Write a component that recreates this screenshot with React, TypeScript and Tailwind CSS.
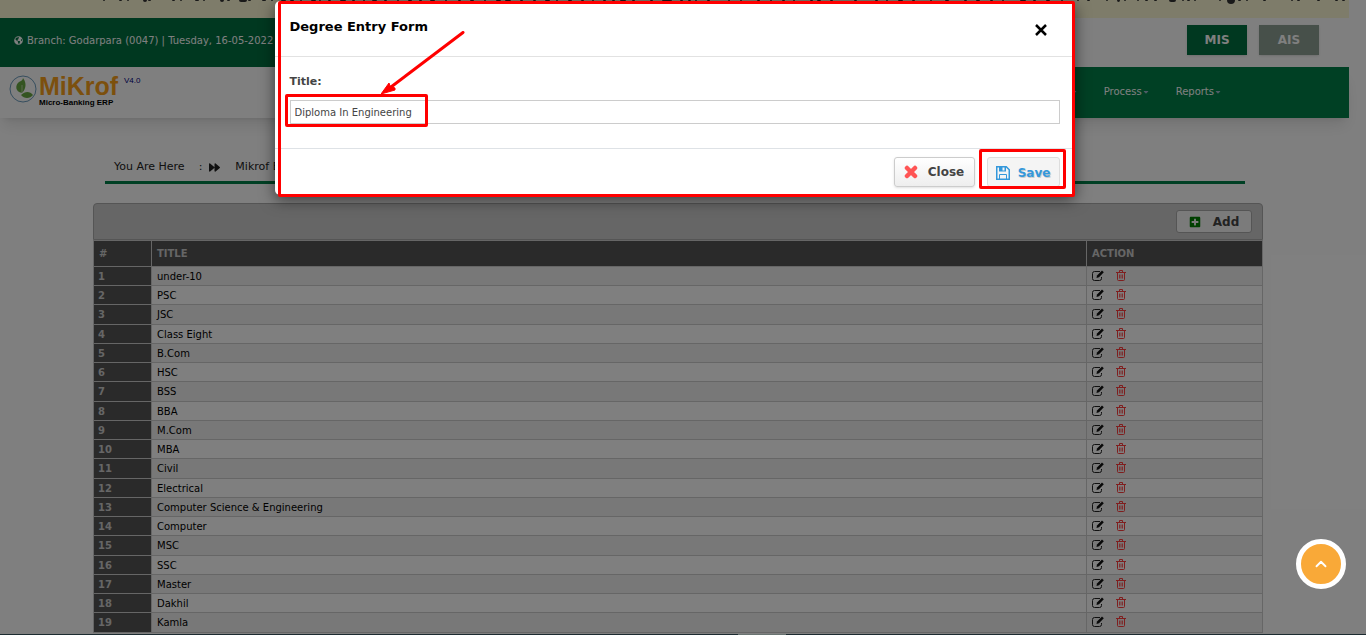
import React from "react";
import { FaGlobeAmericas, FaForward, FaPlusSquare, FaCaretDown } from "react-icons/fa";
import { ChevronUp } from "lucide-react";

const degrees = [
  "under-10", "PSC", "JSC", "Class Eight", "B.Com", "HSC", "BSS", "BBA", "M.Com", "MBA",
  "Civil", "Electrical", "Computer Science & Engineering", "Computer", "MSC", "SSC", "Master", "Dakhil", "Kamla",
];

// [x, width, height] of the strokes left visible under the scrolled notice line
const noticeStrokes = [
  [103, 2, 1], [119, 3, 1], [127, 2, 1], [143, 4, 2], [148, 3, 1], [172, 3, 1], [180, 2, 1], [195, 4, 1], [203, 2, 1],
  [220, 4, 2], [227, 3, 1], [239, 8, 2], [248, 3, 1], [262, 4, 1], [271, 2, 1],
  [281, 5, 1], [290, 4, 1], [300, 2, 1], [311, 5, 1], [319, 2, 1], [328, 3, 1], [340, 6, 1], [352, 3, 1], [363, 2, 1],
  [372, 5, 1], [384, 3, 1], [397, 2, 1], [408, 4, 1], [419, 3, 1], [430, 5, 1], [445, 2, 1], [458, 3, 1], [470, 4, 1],
  [484, 2, 1], [496, 5, 1], [505, 6, 1], [520, 3, 1], [533, 3, 1], [545, 5, 1], [556, 2, 1], [568, 4, 1], [581, 3, 1],
  [592, 2, 1], [603, 3, 1], [612, 3, 1], [620, 6, 1], [632, 3, 1], [650, 3, 1], [662, 10, 1], [680, 3, 1], [688, 3, 1],
  [695, 2, 1], [707, 3, 1], [728, 2, 1], [740, 2, 1], [757, 3, 1], [770, 2, 1], [782, 3, 1], [793, 2, 1], [810, 3, 1],
  [817, 4, 1], [830, 3, 1], [854, 3, 1], [875, 3, 1], [886, 2, 1], [898, 5, 1], [912, 3, 1], [930, 2, 1], [945, 4, 1],
  [964, 3, 1], [976, 4, 1], [990, 3, 1], [1002, 2, 1], [1020, 6, 1], [1033, 3, 1], [1046, 4, 1], [1061, 2, 1],
  [1077, 2, 1], [1087, 3, 1], [1106, 2, 1], [1117, 3, 2], [1124, 2, 1], [1137, 2, 1], [1145, 3, 1], [1154, 3, 1],
  [1169, 7, 2], [1182, 2, 1], [1187, 3, 1], [1194, 2, 1], [1219, 2, 1], [1227, 8, 4], [1238, 3, 1], [1246, 2, 1],
  [1263, 3, 1], [1291, 2, 1], [1297, 3, 1], [1317, 3, 1], [1335, 3, 1], [1342, 3, 1],
];

function Leaf() {
  return (
    <svg className="size-7 shrink-0" viewBox="0 0 28 28" aria-hidden="true">
      <circle cx="14" cy="14" r="13" fill="none" stroke="#6c9cbd" />
      <path d="M14 3c4 5 3 11-1 15-7-1-7-8-3-11 2-1 4-2 4-4Z" fill="#69a843" />
      <path d="M12 20c4-4 9-4 12 0-3 4-9 4-12 0Z" fill="#69a843" />
      <path d="M13 10v8" fill="none" stroke="#fff" strokeWidth=".5" />
    </svg>
  );
}

function EditIcon() {
  return (
    <svg className="h-[11px] w-3" viewBox="0 0 12 11" fill="none" aria-hidden="true">
      <path d="M8 1.500H2.500Q.5 1.500.5 3.500v5q0 2 2 2h5q2 0 2-2V7" stroke="#222" />
      <path d="m4.500 8 .5-2.500L10 .5 11.800 2.300 7 7.300Z" fill="#111" />
    </svg>
  );
}

function TrashIcon() {
  return (
    <svg className="h-[11px] w-[10px]" viewBox="0 0 10 11" fill="none" stroke="#ff3c3c" aria-hidden="true">
      <path d="M0 2.500h10M3.500 2.500v-2h3v2M1.500 3v6.500q0 1 1 1h5q1 0 1-1V3" />
      <path d="M3.500 4.500v4M5 4.500v4M6.500 4.500v4" strokeWidth=".8" />
    </svg>
  );
}

function SaveIcon() {
  return (
    <svg className="size-[14px]" viewBox="0 0 14 14" fill="none" aria-hidden="true">
      <path d="M.75.75h9.500l3 3v9.500H.75Z" stroke="#3498db" strokeWidth="1.500" />
      <path d="M3 1h7v4.500H3Z" fill="#3498db" />
      <path d="M6.500 1.500h2v3h-2Z" fill="#f4f4f4" />
      <path d="M3.500 13V8.500h7V13" stroke="#3498db" />
    </svg>
  );
}

function Cross() {
  return (
    <svg className="size-[14px]" viewBox="0 0 14 14" aria-hidden="true">
      <path d="m3 3 8 8M11 3l-8 8" stroke="#ff5454" strokeWidth="4.500" strokeLinecap="round" />
    </svg>
  );
}

export default function App() {
  return (
    <div className="relative h-screen overflow-hidden bg-white font-['DejaVu_Sans','Verdana',sans-serif] text-[10px] text-black">
      <div className="pr-[17px]">
        <div className="h-[18px] overflow-hidden bg-[#fcf8d4]">
          <svg className="h-1 w-[1349px]" aria-hidden="true">
            {noticeStrokes.map(([x, w, h]) => (
              <rect key={x} x={x} y={-h} width={w} height={h * 2} rx={h} fill="#333" />
            ))}
          </svg>
        </div>
        <header>
          <div className="flex h-[49px]">
            <div className="flex w-1/2 items-center bg-[#007041] pb-1 pl-[14px] text-white">
              <FaGlobeAmericas className="mr-1 size-[9px]" />
              <span>Branch: Godarpara (0047) | Tuesday, 16-05-2022</span>
            </div>
            <div className="ml-auto flex gap-3 pt-[7px] pr-[30px] text-xs font-bold">
              <button className="h-[30px] w-[60px] bg-[#007041] text-white shadow">MIS</button>
              <button className="h-[30px] w-[60px] bg-[#8fa095] text-white shadow">AIS</button>
            </div>
          </div>
          <div className="flex h-[51px] shadow-lg">
            <div className="flex w-1/2 items-start bg-white pt-2 pl-[9px] font-['Liberation_Sans',sans-serif]">
              <Leaf />
              <div className="ml-[2px] w-[79px] whitespace-nowrap">
                <div className="text-[25px] leading-[22px] font-bold text-[#f9a11b]">MiKrof</div>
                <div className="text-[8px] leading-3 font-bold">Micro-Banking ERP</div>
              </div>
              <span className="ml-[6px] text-[8px] leading-3 text-[#000080]">V4.0</span>
            </div>
            <nav className="flex w-1/2 items-center justify-end gap-[26px] bg-[#008148] pr-[127px] pb-[2px] text-white">
              <a href="#more" aria-label="More"><FaCaretDown className="size-2 text-[#9cb8cc]" /></a>
              <a href="#process" className="flex items-center">Process<FaCaretDown className="size-2 text-[#9cb8cc]" /></a>
              <a href="#reports" className="flex items-center">Reports<FaCaretDown className="size-2 text-[#9cb8cc]" /></a>
            </nav>
          </div>
        </header>
        <div className="mr-[104px] ml-[105px] mt-[33px] flex h-[33px] items-center border-b-[3px] border-[#008148] pt-[2px] pl-[9px] text-[11px] text-[#222]">
          <span>You Are Here</span>
          <span className="ml-[14px]">:</span>
          <FaForward className="mx-[7px] size-[11px]" />
          <a href="#home" className="ml-2">Mikrof ERP</a>
        </div>
        <main className="mt-[19px] mr-[86px] ml-[93px]">
          <div className="flex h-[37px] items-center justify-end rounded-t border border-[#aaa] bg-[#ccc] pr-[10px]">
            <button className="flex h-[23px] w-[76px] items-center justify-center gap-3 rounded-[3px] border border-[#aaa] bg-[#f6f6f6] text-xs font-bold text-[#444]">
              <FaPlusSquare className="size-3 text-[#008000]" />Add
            </button>
          </div>
          <table className="w-full table-fixed border-collapse text-left">
            <thead>
              <tr className="h-[26px] bg-[#555] text-[#ccc]">
                <th className="w-[58px] border border-[#ccc] px-[5px]">#</th>
                <th className="border border-[#ccc] px-[5px]">TITLE</th>
                <th className="w-[176px] border border-[#ccc] px-[5px]">ACTION</th>
              </tr>
            </thead>
            <tbody>
              {degrees.map((title, i) => (
                <tr key={title} className="h-[19px] odd:bg-[#f0f0f0] nth-[4n+3]:h-5">
                  <th className="border border-[#ccc] bg-[#555] px-1 font-bold text-[#ccc]">{i + 1}</th>
                  <td className="border border-[#ccc] px-[5px]">{title}</td>
                  <td className="border border-[#ccc] px-[5px] pb-[2px]">
                    <div className="flex gap-3">
                      <button aria-label={`Edit ${title}`}><EditIcon /></button>
                      <button aria-label={`Delete ${title}`}><TrashIcon /></button>
                    </div>
                  </td>
                </tr>
              ))}
            </tbody>
          </table>
        </main>
      </div>

      <div className="absolute inset-0 flex items-start justify-center bg-black/50 pt-px pr-[17px]">
        <section role="dialog" aria-labelledby="dialog-title" className="relative w-[800px] rounded-[5px] bg-white shadow-[0_5px_15px_#0008]">
          <div className="flex h-14 justify-between border-b border-[#e2e2e2] px-[15px]">
            <h1 id="dialog-title" className="pt-4 text-[13px] leading-5 font-bold">Degree Entry Form</h1>
            <button aria-label="Close form" className="mt-[2px] mr-3">
              <svg className="size-[14px]" viewBox="0 0 14 14" aria-hidden="true">
                <path d="m2 2 10 10M12 2 2 12" stroke="#000" strokeWidth="2.500" />
              </svg>
            </button>
          </div>
          <div className="h-[92px] border-b border-[#dee2e6] px-[15px] pt-[17px]">
            <label htmlFor="title" className="block text-[11px] leading-4 font-bold text-[#444]">Title:</label>
            <input id="title" defaultValue="Diploma In Engineering" className="mt-[10px] h-6 w-full border border-[#ccc] px-1 text-[10px] text-[#444] outline-none" />
          </div>
          <div className="flex h-[46px] justify-end gap-3 px-[15px] pt-2 text-xs font-bold">
            <button className="flex h-[30px] w-[81px] items-center justify-center gap-[10px] rounded-[3px] border border-[#ccc] bg-linear-to-b from-white to-[#eee] text-[#444] shadow-sm">
              <Cross />Close
            </button>
            <button className="flex h-[30px] w-[73px] items-center justify-center gap-2 rounded-[3px] border border-[#ddd] bg-[#f4f4f4] pt-[2px] text-[#3498db] text-shadow-[1px_1px_0_#ccc]">
              <SaveIcon />Save
            </button>
          </div>
          <div className="pointer-events-none absolute top-0 right-0 -bottom-[2px] left-[3px] rounded-[2px] border-3 border-[#f00]" />
          <div className="pointer-events-none absolute top-[93px] left-[10px] h-[33px] w-[143px] rounded-[2px] border-3 border-[#f00]" />
          <div className="pointer-events-none absolute top-[148px] right-[9px] h-10 w-[87px] rounded-[2px] border-3 border-[#f00]" />
          <svg className="pointer-events-none absolute top-[30px] left-[106px] h-[64px] w-[84px]" viewBox="0 0 84 64" aria-hidden="true">
            <path d="M82 1.500 10 56" stroke="#f00" strokeWidth="3" strokeLinecap="round" />
            <path d="m0 63 8-11 1 3 5 2v2Z" fill="#f00" stroke="#f00" strokeLinejoin="round" />
          </svg>
        </section>
      </div>

      <button aria-label="Back to top" className="absolute right-5 bottom-[46px] flex size-[50px] items-center justify-center rounded-full border-5 border-white bg-[#f9a938] text-white">
        <ChevronUp className="size-[18px]" strokeWidth={2.5} />
      </button>
      <div className="absolute inset-x-0 bottom-0 flex h-px bg-[#1c2b30]">
        <div className="ml-[54%] w-12 bg-[#6a7572]" />
      </div>
    </div>
  );
}
